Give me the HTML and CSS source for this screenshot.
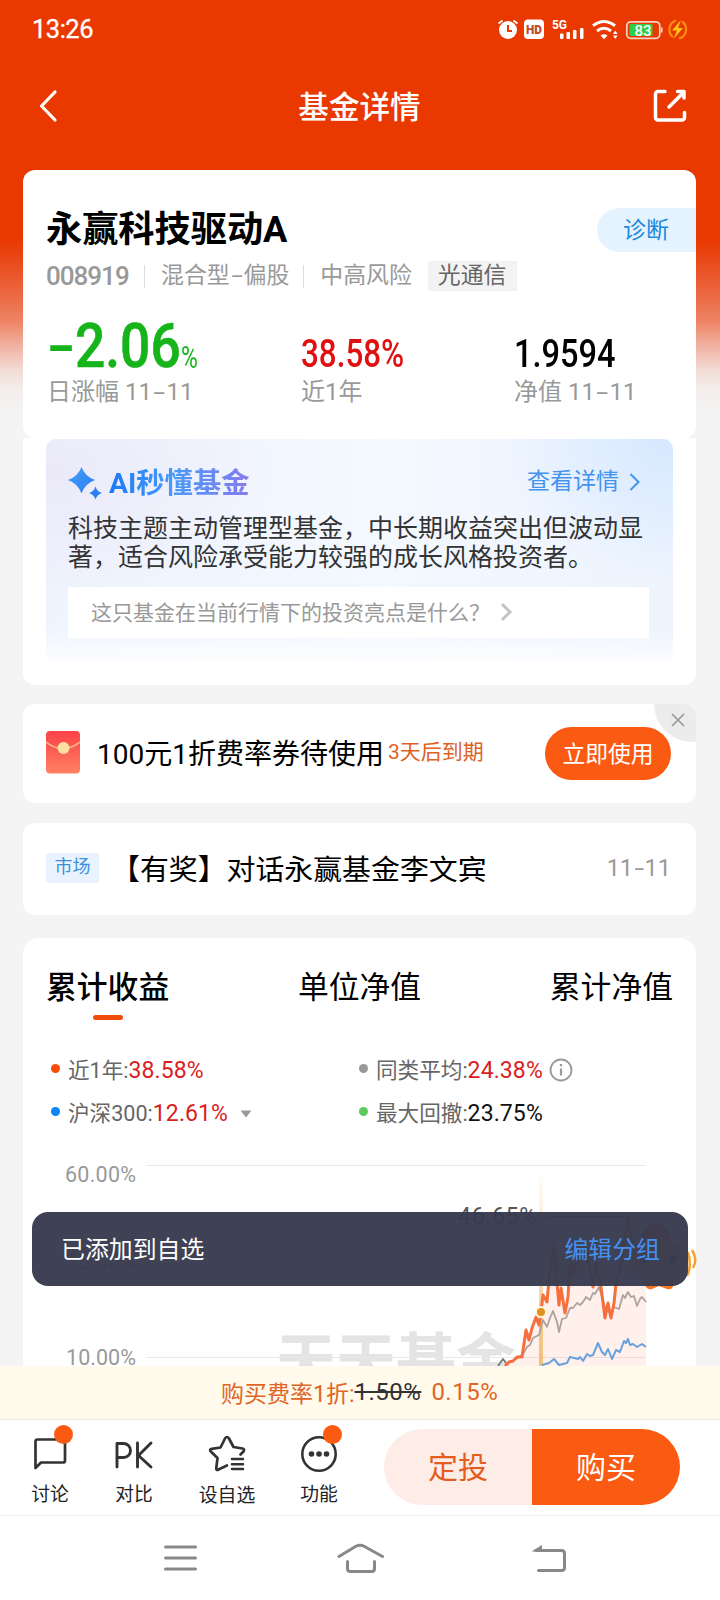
FILE: index.html
```html
<!DOCTYPE html>
<html lang="zh-CN">
<head>
<meta charset="utf-8">
<title>基金详情</title>
<link rel="stylesheet" href="styles.css">
</head>
<body>
<div class="screen">
  <header class="status">
    <span class="clock">13:26</span>
    <svg class="status-icons" width="194" height="24" viewBox="496 17 194 24">
      <g fill="#fff">
        <circle cx="508" cy="30" r="9"/>
        <path d="M498.500 23.500l4-3M517.500 23.500l-4-3" stroke="#fff" stroke-width="2"/>
        <rect x="524" y="19.500" width="20" height="19.500" rx="4"/>
        <rect x="560" y="33.500" width="3.500" height="5.500" rx="1"/>
        <rect x="566.500" y="32" width="3.500" height="7" rx="1"/>
        <rect x="573" y="30" width="3.500" height="9" rx="1"/>
        <rect x="580" y="28" width="3.500" height="11" rx="1"/>
        <path d="M600.500 35.500q3.500-2.500 7 0l-3.500 3.700zM613 34l2.300-3.600 2.300 3.600zM613 35.500l2.300 3.600 2.300-3.600z"/>
      </g>
      <path d="M508 25v6h4" fill="none" stroke="#e93901" stroke-width="2"/>
      <text class="ic-hd" x="534" y="34" text-anchor="middle" textLength="16" lengthAdjust="spacingAndGlyphs">HD</text>
      <text class="ic-5g" x="552" y="28.500" textLength="15" lengthAdjust="spacingAndGlyphs">5G</text>
      <g fill="none" stroke="#fff" stroke-width="3">
        <path d="M593 25.700q11-8.500 22 0M597 31q7-5.600 14 0"/>
      </g>
      <rect x="626.800" y="21.800" width="33" height="16.500" rx="4" fill="none" stroke="#f6d3c4" stroke-width="1.700"/>
      <rect x="629.500" y="24" width="23" height="12" rx="1.500" fill="#2fce4a"/>
      <rect x="661" y="27.500" width="1.500" height="5" fill="#f6d3c4"/>
      <text class="ic-batt" x="643" y="35.700" text-anchor="middle" textLength="17">83</text>
      <path d="M676 20.500a9.500 9.500 0 0 0-3 16.500M679 38.500a9.500 9.500 0 0 0 3-17" fill="none" stroke="#ff8a10" stroke-width="2.200"/>
      <path d="M681 20l-9 10.500h5l-3.500 8.500 9.500-11h-5z" fill="#ffc41a"/>
    </svg>
  </header>

  <nav class="titlebar">
    <svg width="20" height="34" viewBox="0 0 20 34"><path d="M17 3L3.500 17 17 31" fill="none" stroke="#fff" stroke-width="3.200" stroke-linecap="round" stroke-linejoin="round"/></svg>
    <h1>基金详情</h1>
    <svg width="34" height="34" viewBox="653 89 34 34" fill="none" stroke="#fff" stroke-width="3.500" stroke-linejoin="round" stroke-linecap="round"><path d="M665 91.500h-7a2.500 2.500 0 0 0-2.500 2.500v23.500a2.500 2.500 0 0 0 2.500 2.500h24a2.500 2.500 0 0 0 2.500-2.500v-5M669 107l15-15M677.500 91.500h6.500v6.500"/></svg>
  </nav>

  <main>
    <section class="card fund">
      <div class="fund-head">
        <h2>永赢科技驱动A</h2>
        <a class="diagnose">诊断</a>
      </div>
      <div class="meta">
        <b>008919</b><i></i><span>混合型<u>-</u>偏股</span><i></i><span>中高风险</span><em>光通信</em>
      </div>
      <div class="stats">
        <div class="stat day"><p class="big"><span class="minus">-</span><span class="digits">2.06</span><small>%</small></p><p class="label">日涨幅 11<u>-</u>11</p></div>
        <div class="stat year"><p class="num red">38.58%</p><p class="label">近1年</p></div>
        <div class="stat nav"><p class="num value">1.9594</p><p class="label">净值 11<u>-</u>11</p></div>
      </div>
    </section>

    <section class="ai-card">
      <div class="ai">
        <div class="ai-head">
          <svg width="35" height="34" viewBox="0 0 35 34"><defs><linearGradient id="star" x1="0" y1="0" x2="1" y2="1"><stop offset="0" stop-color="#46a0f8"/><stop offset="1" stop-color="#2b7cf2"/></linearGradient></defs><path d="M13.500 1Q17 10.500 27 14 17 17.500 13.500 27.500 10 17.500 0 14 10 10.500 13.500 1Z" fill="url(#star)"/><path d="M27.500 20.500Q29 25.500 34 27 29 28.500 27.500 33.500 26 28.500 21 27 26 25.500 27.500 20.500Z" fill="#2f80ee"/></svg>
          <h3>AI秒懂基金</h3>
          <a>查看详情</a>
          <svg class="more" width="12" height="20" viewBox="0 0 12 20"><path d="M1.500 2l8 8-8 8" fill="none" stroke="#4393ee" stroke-width="2"/></svg>
        </div>
        <p class="ai-text">科技主题主动管理型基金，中长期收益突出但波动显著，适合风险承受能力较强的成长风格投资者。</p>
        <div class="ask"><span>这只基金在当前行情下的投资亮点是什么？</span><svg width="13" height="20" viewBox="0 0 13 20"><path d="M2 2l8 8-8 8" fill="none" stroke="#c4c4c4" stroke-width="3"/></svg></div>
      </div>
    </section>

    <section class="card coupon">
      <svg width="34" height="43" viewBox="0 0 34 43"><defs><linearGradient id="env" x1="0" y1="0" x2="0" y2="1"><stop offset="0" stop-color="#fb4248"/><stop offset="1" stop-color="#ff8061"/></linearGradient></defs><rect width="34" height="42.500" rx="4" fill="url(#env)"/><path d="M0 11q17 13 34 0" fill="none" stroke="#f9b98a" stroke-width="1.500"/><circle cx="17.500" cy="17" r="6" fill="#fce0a0"/></svg>
      <strong>100元1折费率券待使用</strong>
      <span class="expire">3天后到期</span>
      <button>立即使用</button>
      <div class="close"><svg width="14" height="14" viewBox="0 0 14 14"><path d="M1 1l12 12M13 1L1 13" stroke="#999" stroke-width="1.700"/></svg></div>
    </section>

    <section class="card notice">
      <span class="tag">市场</span>
      <strong>【有奖】对话永赢基金李文宾</strong>
      <time>11<u>-</u>11</time>
    </section>

    <section class="card perf">
      <div class="tabs"><a class="active">累计收益</a><a>单位净值</a><a>累计净值</a></div>
      <div class="legend">
        <div><i class="dot orange"></i><span>近1年:</span><b>38.58%</b></div>
        <div><i class="dot gray"></i><span>同类平均:</span><b>24.38%</b><svg class="info" width="24" height="24" viewBox="0 0 24 24"><circle cx="12" cy="12" r="10.500" fill="none" stroke="#999" stroke-width="1.800"/><path d="M12 10.500v7M12 6v2.200" stroke="#999" stroke-width="2.200"/></svg></div>
        <div><i class="dot blue"></i><span>沪深300:</span><b>12.61%</b><svg class="caret" width="12" height="8" viewBox="0 0 12 8"><path d="M0.500 0.500h11L6 7.500z" fill="#999"/></svg></div>
        <div><i class="dot green"></i><span>最大回撤:</span><b class="dark">23.75%</b></div>
      </div>
      <svg class="chart" width="673" height="231" viewBox="23 1135 673 231">
        <defs>
          <linearGradient id="cursor" gradientUnits="userSpaceOnUse" x1="0" y1="1168" x2="0" y2="1365"><stop offset="0" stop-color="#f3c277" stop-opacity="0"/><stop offset="1" stop-color="#f0c079"/></linearGradient>
        </defs>
        <text class="watermark" x="276" y="1383" textLength="240">天天基金</text>
        <path d="M146 1165.500H646M146 1261.500H646M146 1357.500H646" stroke="#e9e9e9"/>
        <text class="axis" x="65" y="1182" textLength="71">60.00%</text>
        <text class="axis" x="65" y="1269" textLength="71">35.00%</text>
        <text class="axis" x="66" y="1365" textLength="70">10.00%</text>
        <path fill="#fb5a1c" fill-opacity=".09" d="M505 1366L517 1357 522 1357 526 1330 529 1340 536 1317 539 1325 541 1312 543 1295 547 1302 549 1280 554 1243 557 1283 559 1305 561 1288 565 1313 568 1297 570 1263 573 1275 580 1247 587 1253 593 1287 596 1262 601 1287 605 1318 608 1303 611 1318 614 1303 616 1283 620 1270 628 1217 633 1250 640 1243 646 1250V1366Z"/>
        <rect x="539" y="1168" width="4" height="198" fill="url(#cursor)"/>
        <g fill="none" stroke-width="1.800" stroke-linejoin="round">
          <path stroke="#777" d="M498 1366L503 1359 506 1363"/>
          <path stroke="#aea29e" d="M506 1364L518 1358 523 1354 527 1347 530 1345 533 1338 539 1335 543 1320 547 1327 550 1318 553 1311 557 1322 559 1332 562 1319 566 1318 570 1308 573 1308 577 1303 580 1305 583 1302 586 1297 590 1300 593 1293 595 1294 599 1287 605 1307 611 1315 614 1307 619 1309 623 1295 625 1298 628 1292 631 1297 634 1296 637 1306 640 1299 642 1297 646 1302"/>
          <path stroke="#69a1df" stroke-width="2" d="M542 1365L549 1363 554 1359 559 1365 567 1363 570 1357 578 1359 580 1357 583 1361 587 1354 590 1356 593 1355 598 1343 602 1352 605 1355 608 1349 612 1359 616 1350 620 1352 624 1341 626 1343 628 1339 630 1345 633 1344 637 1347 642 1344 646 1347"/>
          <path stroke="#f76f3e" stroke-width="3" d="M505 1366L509 1362 513 1361 517 1357 522 1357 526 1330 529 1340 532 1328 536 1317 539 1325 541 1312 543 1295 547 1302 549 1280 554 1243 557 1283 559 1305 561 1288 565 1313 568 1297 570 1263 573 1275 580 1247 587 1253 593 1287 596 1262 601 1287 605 1318 608 1303 611 1318 614 1303 616 1283 620 1270 628 1217 633 1250 640 1243 646 1250"/>
        </g>
        <circle cx="541" cy="1312" r="5" fill="#df921f" stroke="#fff6de" stroke-width="2"/>
        <text class="peak" x="458" y="1223.500" textLength="78">46.65%</text>
        <path d="M547 1216.500h80" stroke="#555"/>
        <g>
          <circle cx="656" cy="1239" r="15" fill="#f9762d"/>
          <ellipse cx="659" cy="1262" rx="28" ry="22" fill="#f2c67a"/>
          <path d="M645 1281q0 10 7 8l7-3 8 3q7 2 7-8z" fill="#fb7420"/>
          <path d="M688 1252q4 14-1 24M692 1250q6 9 1 18" fill="none" stroke="#f5a030" stroke-width="2.500"/>
          <circle cx="644" cy="1260" r="4" fill="#246"/><circle cx="673" cy="1259" r="4" fill="#246"/>
        </g>
      </svg>
    </section>
  </main>

  <div class="toast"><span>已添加到自选</span><a>编辑分组</a></div>

  <div class="fee"><span>购买费率1折:</span><s>1.50%</s><b>0.15%</b></div>

  <footer class="actions">
    <div class="act a1"><svg width="42" height="52" viewBox="32 1424 42 52"><path d="M35.500 1468V1441.500a2 2 0 0 1 2-2H63a2 2 0 0 1 2 2V1460.500a2 2 0 0 1-2 2H41Z" fill="none" stroke="#333" stroke-width="2.700" stroke-linejoin="round"/><circle cx="63.500" cy="1434.500" r="9.500" fill="#fb5a12"/></svg><span>讨论</span></div>
    <div class="act a2"><svg width="42" height="52" viewBox="113 1424 42 52"><path d="M117 1467V1443.500h6.500a6.500 6.500 0 0 1 0 14H117M137.500 1443v24M151 1443l-12.500 12.500 12.500 11.500" fill="none" stroke="#333" stroke-width="2.900" stroke-linecap="round" stroke-linejoin="round"/></svg><span>对比</span></div>
    <div class="act a3"><svg width="42" height="52" viewBox="206 1424 42 52"><path d="M227 1465.500L218.500 1469.500Q216 1471 216.300 1468L217.500 1458 210.800 1451.500Q209 1449.500 211.700 1448.800L220.500 1447.500 225 1438.500Q227 1435.500 229 1438.500L233.500 1447 242.500 1448.500Q245 1449 243.500 1451.500L240.500 1454.500" fill="none" stroke="#333" stroke-width="2.700" stroke-linecap="round" stroke-linejoin="round"/><path d="M232 1459h11M232 1464.200h11M232 1469h11" stroke="#333" stroke-width="2.600" stroke-linecap="round"/></svg><span>设自选</span></div>
    <div class="act a4"><svg width="46" height="52" viewBox="298 1424 46 52"><circle cx="319" cy="1454" r="16.700" fill="none" stroke="#333" stroke-width="2.600"/><circle cx="311.500" cy="1454" r="2.800" fill="#333"/><circle cx="319" cy="1454" r="2.800" fill="#333"/><circle cx="326.500" cy="1454" r="2.800" fill="#333"/><circle cx="332.500" cy="1434.500" r="9.500" fill="#fb5a12"/></svg><span>功能</span></div>
    <div class="buy"><a class="plan">定投</a><a class="now">购买</a></div>
  </footer>

  <nav class="sysnav">
    <svg width="34" height="28" viewBox="0 0 34 28"><path d="M2.500 3h30M2.500 14h30M2.500 25h30" stroke="#888" stroke-width="3" stroke-linecap="round"/></svg>
    <svg class="home" width="48" height="32" viewBox="336 1541 48 32"><path d="M339 1555.500L355.500 1545.500Q360 1543 364.500 1545.500L382.500 1555.500M347.500 1560.500v7q0 3 3 3h21q3 0 3-3v-7" fill="none" stroke="#888" stroke-width="3" stroke-linecap="round"/></svg>
    <svg width="36" height="30" viewBox="531 1542 36 30"><path d="M538.500 1569.500H561.500q3 0 3-3V1552.500q0-3-3-3H536" fill="none" stroke="#888" stroke-width="3" stroke-linecap="round"/><path d="M531.500 1550.500L542 1544v6.500z" fill="#888"/></svg>
  </nav>
</div>
</body>
</html>
```
FILE: styles.css
```css
* { box-sizing: border-box; margin: 0; padding: 0; }
body { font-family: Roboto, "Noto Sans CJK SC", sans-serif; background: #f4f4f4; }
b, i, em, strong, h1, h2, h3 { font-style: normal; font-weight: 400; }
svg { display: block; flex: none; }
/* wide hyphen between digits and ideographs */
u { text-decoration: none; display: inline-block; transform: scaleX(1.8); margin: 0 4px; }
.screen {
  position: relative; width: 720px; height: 1600px; overflow: hidden;
  display: flex; flex-direction: column; white-space: nowrap;
  background: linear-gradient(180deg, #e93901 0, #e93901 240px, #ea5a30 280px, #ee8465 322px, #f0b09e 345px, #f2dcd6 370px, #f4eeec 390px, #f4f4f4 415px);
}

/* status bar */
.status { height: 58px; padding: 0 30px 0 32px; display: flex; justify-content: space-between; align-items: center; }
.clock { color: #fff; font-size: 25.500px; font-weight: 400; letter-spacing: -0.500px; -webkit-text-stroke: 0.300px #fff; }
.ic-hd { font-size: 13px; font-weight: 900; fill: #c24a28; }
.ic-5g { font-size: 13px; font-weight: 700; fill: #fff; }
.ic-batt { font-size: 15px; font-weight: 500; fill: #fff; }

.titlebar { height: 112px; padding: 0 33px 16px 38px; display: flex; align-items: center; justify-content: space-between; color: #fff; }
.titlebar h1 { font-size: 30.600px; font-weight: 500; line-height: 40px; padding: 3px 0 0 8px; }

main { flex: 1; min-height: 0; overflow: hidden; padding: 0 24px 0 23px; }
.card { background: #fff; border-radius: 12px; }

/* fund summary */
.fund { height: 268px; padding: 38px 0 0 23px; }
.fund-head { height: 44px; display: flex; justify-content: space-between; align-items: center; }
.fund-head h2 { font-size: 36.200px; font-weight: 700; line-height: 44px; padding-bottom: 1px; }
.diagnose { width: 99px; height: 44px; line-height: 45px; padding-left: 26px; border-radius: 22px 0 0 22px; background: #e5f3ff; color: #1989dd; font-size: 23px; }
.meta { margin-top: 9px; height: 30px; display: flex; align-items: center; color: #999; font-size: 22.900px; line-height: 30px; }
.meta b { font-size: 26px; font-weight: 500; letter-spacing: -1px; width: 98px; }
.meta i { width: 1px; height: 23px; background: #ddd; margin-right: 16px; }
.meta span { margin-right: 14px; }
.meta u { margin: 0 3.500px 0 4px; }
.meta span + em { margin-left: 2px; padding: 0 10px; background: #f3f3f3; color: #666; height: 30px; }
.stats { display: flex; margin-top: 21px; padding-left: 1px; }
.day { width: 254px; }
.year { width: 213px; }
.big { height: 67px; line-height: 67px; font-size: 62px; font-weight: 500; color: #17b31b; display: flex; }
.minus { width: 28px; transform: scaleX(1.35); transform-origin: 0 0; }
.digits { width: 106px; transform: scaleX(.86); transform-origin: 0 0; -webkit-text-stroke: 0.600px #17b31b; }
.big small { font-size: 31px; font-weight: 400; line-height: 91px; transform: scaleX(.74); transform-origin: 0 0; }
.num { height: 67px; line-height: 85px; font-size: 39px; font-weight: 500; color: #000; transform: scaleX(.805); transform-origin: 0 0; }
.value { transform: scaleX(.835); }
.red { color: #e11010; }
.label { height: 28px; line-height: 27px; font-size: 24px; color: #999; }

/* AI digest */
.ai-card { height: 247px; padding: 0 23px; background: #fff; border-radius: 0 0 12px 12px; }
.ai {
  height: 223px; margin-top: 1px; padding: 25px 24px 0 22px; border-radius: 10px;
  background:
    linear-gradient(180deg, transparent 85%, rgba(255, 255, 255, .8) 100%),
    radial-gradient(ellipse 180px 140px at 100% 0, #d6e8ff, transparent),
    radial-gradient(ellipse 240px 140px at 0 15%, #ebe9f9, transparent),
    linear-gradient(90deg, #eff5fe, #f4f8ff 55%, #edf4fe);
}
.ai-head { display: flex; height: 38px; align-items: center; }
.ai-head h3 { margin-left: 6px; font-size: 28.300px; font-weight: 700; line-height: 36px; padding-top: 1px; background: linear-gradient(90deg, #1a7af5, #4a9af8 45%, #8b79ee); -webkit-background-clip: text; background-clip: text; color: transparent; flex: 1; max-width: 144px; }
.ai-head a { margin-left: auto; color: #4393ee; font-size: 23px; line-height: 30px; padding-bottom: 3px; }
.more { margin: 0 8px 3px 10px; }
.ai-text { white-space: normal; width: 577px; font-size: 25px; line-height: 29px; color: #333; margin-top: 12px; word-break: break-all; }
.ask { margin-top: 15px; height: 51px; padding: 0 0 4px 23px; display: flex; align-items: center; background: #fff; color: #999; font-size: 21px; }
.ask svg { margin: 2px 0 0 10px; }
.ai-card { display: flow-root; }

/* coupon */
.coupon { position: relative; margin-top: 19px; height: 99px; padding: 0 25px 0 23px; display: flex; align-items: center; }
.coupon > svg { margin-bottom: 3px; }
.coupon strong { margin-left: 17px; padding-bottom: 4px; font-size: 28px; color: #000; width: 291px; }
.expire { color: #e0601f; font-size: 21px; padding-bottom: 7px; }
.coupon button { margin-left: auto; width: 126px; height: 53px; border: 0; padding-bottom: 3px; border-radius: 27px; background: #fb5a12; color: #fff; font: 22.800px Roboto, "Noto Sans CJK SC", sans-serif; }
.close { position: absolute; top: 0; right: 0; width: 42px; height: 38px; background: #ececec; border-radius: 0 12px 0 38px; display: grid; place-items: center; padding: 0 0 6px 5px; }

.notice { margin-top: 20px; height: 92px; padding: 0 25px 0 23px; display: flex; align-items: center; }
.tag { width: 53px; height: 30px; line-height: 28px; margin-bottom: 2px; text-align: center; font-size: 18px; color: #3d8fdb; background: #e8f3ff; border-radius: 3px; }
.notice strong { margin-left: 12px; padding-bottom: 4px; font-size: 28.900px; color: #000; }
.notice time { margin-left: auto; padding-bottom: 3px; color: #999; font-size: 23.500px; }
.notice u { margin: 0 2.500px; transform: scaleX(1.5); }

/* performance */
.perf { margin-top: 23px; height: 440px; border-radius: 16px 16px 0 0; }
.tabs { height: 100px; padding: 30px 23px 0 23px; display: flex; justify-content: space-between; font-size: 30.800px; line-height: 40px; color: #000; }
.active { font-weight: 500; display: flex; flex-direction: column; align-items: center; }
.active::after { content: ""; width: 30px; height: 5px; margin-top: 7px; border-radius: 3px; background: #f04b0a; }
.legend { height: 97px; padding: 10px 0 0 28px; display: grid; grid-template-columns: 308px 1fr; grid-auto-rows: 43px; font-size: 21.600px; color: #666; }
.legend div { display: flex; align-items: center; }
.legend span { padding-bottom: 2px; }
.legend b { color: #d81e1e; font-size: 23px; padding-top: 1px; letter-spacing: 0.100px; }
.legend .dark { color: #111; }
.dot { width: 9px; height: 9px; border-radius: 50%; margin: 0 8px 3px 0; }
.orange { background: #fb4b08; }
.gray { background: #999; }
.blue { background: #0d86f2; }
.green { background: #5cc95c; }
.info { margin-left: 6px; }
.caret { margin: 2px 0 0 12px; }
.chart { overflow: visible; }
.axis { font-size: 21.500px; fill: #999; }
.peak { font-size: 23px; fill: #555; }
.watermark { font-size: 60px; font-weight: 700; fill: #e4e4e4; }

.toast { position: absolute; left: 32px; top: 1212px; width: 656px; height: 74px; border-radius: 16px; padding: 0 28px 4px 29px; display: flex; justify-content: space-between; align-items: center; background: rgba(57, 59, 78, .97); color: #fff; font-size: 23.900px; }
.toast a { color: #4590ee; }

.fee { flex: none; height: 54px; background: #fffaec; border-bottom: 1px solid #e8e8e4; padding: 0 0 2px 221px; display: flex; align-items: center; font-size: 23px; color: #e06526; }
.fee s, .fee b { font-size: 24px; letter-spacing: 0.500px; }
.fee s { color: #333; }
.fee b { margin-left: 10px; }

.actions { flex: none; height: 96px; background: #fff; border-bottom: 1px solid #eee; display: flex; padding: 4px 40px 0 0; color: #222; font-size: 18.800px; }
.act { display: flex; flex-direction: column; align-items: center; line-height: 39px; }
.a1 { margin-left: 32px; width: 42px; }
.a2 { margin-left: 39px; width: 42px; }
.a3 { margin-left: 42px; width: 60px; }
.a4 { margin-left: 41px; width: 46px; }
.a1 span { margin-right: 6px; }
.a3 span { padding-top: 1px; }
.a4 span { margin-right: 4px; }
.buy { margin: 5px 0 0 auto; width: 296px; height: 76px; border-radius: 38px; overflow: hidden; display: flex; font-size: 30px; line-height: 77px; text-align: center; }
.buy a { flex: 1; }
.plan { background: #fdede6; color: #e65c1e; }
.now { background: #fb5a12; color: #fff; }

.sysnav { flex: none; height: 84px; background: #fff; display: flex; align-items: center; justify-content: space-between; padding: 0 153px 0 163px; }
.home { margin-right: 8px; }
```
